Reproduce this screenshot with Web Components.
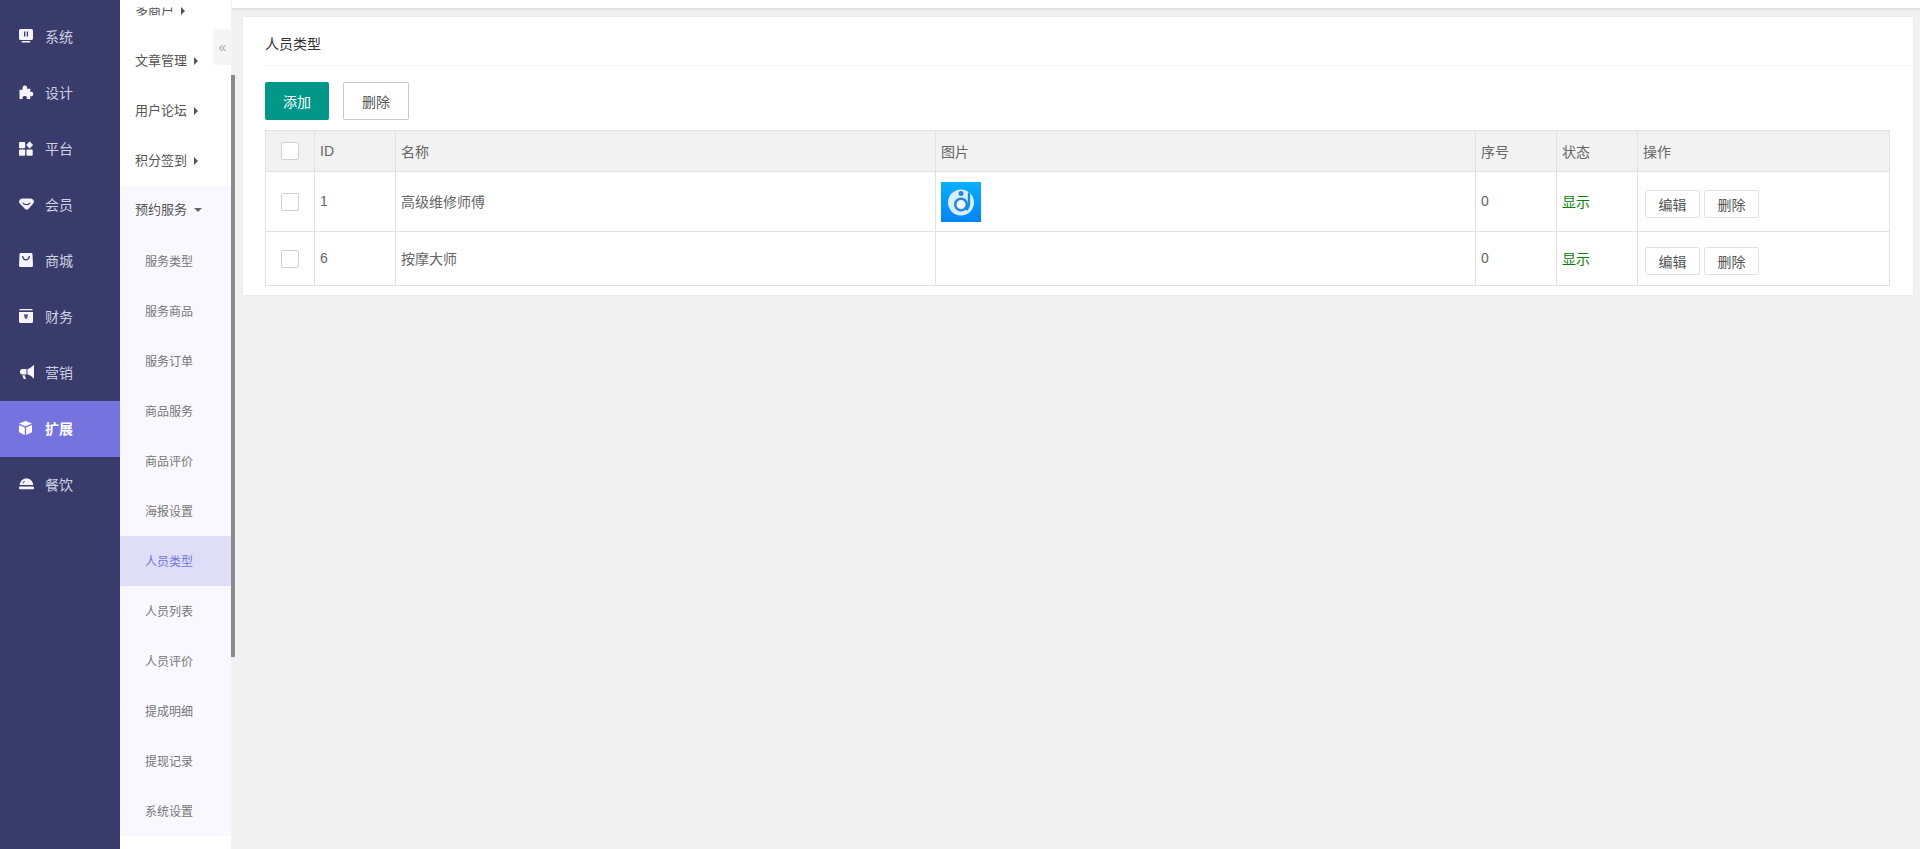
<!DOCTYPE html>
<html lang="zh">
<head>
<meta charset="utf-8">
<title>人员类型</title>
<style>
    html, body {
        margin: 0;
        height: 100%;
        overflow: hidden;
        background: #f1f1f1;
        font-family: "Liberation Sans", "Noto Sans CJK SC", sans-serif;
    }
</style>
</head>
<body>
<app-shell>
    <rail-menu slot="rail"></rail-menu>
    <sub-menu slot="sub"></sub-menu>
    <content-card title-text="人员类型">
        <div slot="tools" style="display:flex;gap:14px">
            <action-button kind="primary">添加</action-button>
            <action-button>删除</action-button>
        </div>
        <staff-table></staff-table>
    </content-card>
</app-shell>

<script>
class AppShell extends HTMLElement {
    constructor() {
        super()
        this.attachShadow({ mode: "open" })
        this.shadowRoot.innerHTML = `
            <style>
                :host {
                    display: flex;
                    height: 849px;
                    overflow: hidden;
                }
                main {
                    flex: 1;
                    min-width: 0;
                    display: flex;
                    flex-direction: column;
                }
                #bar {
                    height: 8px;
                    background: #fff;
                    box-shadow: 0 1px 3px rgba(0, 0, 0, .1);
                }
                #body {
                    padding: 9px 7px 0 11px;
                }
            </style>
            <slot name="rail"></slot>
            <slot name="sub"></slot>
            <main>
                <div id="bar"></div>
                <div id="body"><slot></slot></div>
            </main>
        `
    }
}

class RailMenu extends HTMLElement {
    static items = [
        ["系统", `<path d="M1.500 0h11A1.500 1.500 0 0 1 14 1.500v8a1.500 1.500 0 0 1-1.500 1.500h-11A1.500 1.500 0 0 1 0 9.500v-8A1.500 1.500 0 0 1 1.500 0zM5 2.500v5h1.300v-5zm2.700 0v5H9v-5z" fill-rule="evenodd"/><rect x="2.500" y="12" width="9" height="1.500" rx=".7"/>`],
        ["设计", `<path d="M5.800.5c1.400 0 2.300.9 2.300 2 0 .6-.3 1-.3 1.300h3.500v3.300c.3.100.7-.3 1.300-.3 1 0 1.700.9 1.700 2.200s-.7 2.200-1.700 2.200c-.6 0-1-.4-1.300-.3V14H7.600c-.1-.3.300-.7.300-1.300 0-1-.9-1.700-2.200-1.700s-2.200.7-2.200 1.700c0 .6.400 1 .3 1.300H.5V4.800h3.400c0-.3-.4-.7-.4-1.300 0-1.800.9-3 2.300-3z"/>`],
        ["平台", `<rect x="0" y="1" width="6.200" height="6.200" rx=".8"/><rect x="7.500" y="8.500" width="6.200" height="6.200" rx=".8"/><rect x="0" y="8.500" width="6.200" height="6.200" rx=".8"/><path d="M10.600.8l3 3.200-3 3.200-3-3.200z" stroke="currentColor" stroke-width=".8" stroke-linejoin="round"/>`],
        ["会员", `<path d="M4 1.500h7c2.400 0 4 1.500 4 3.200 0 .8-.4 1.400-1 2l-4.600 5.200c-1 1-2.300 1-3.300 0L1 6.700c-.6-.6-1-1.200-1-2C0 3 1.600 1.500 4 1.500zM4 5.400l-.7.800c1.100 1.300 2.600 2 4.200 2s3.100-.7 4.200-2l-.7-.8c-.9.900-2.100 1.500-3.500 1.500S4.900 6.300 4 5.400z" fill-rule="evenodd"/>`],
        ["商城", `<path d="M1.800 0h10.400A1.300 1.300 0 0 1 13.500 1.200L14 12.500a1.500 1.500 0 0 1-1.500 1.500h-11A1.500 1.500 0 0 1 0 12.500L.5 1.200A1.300 1.300 0 0 1 1.800 0zM3 3c0 2.400 1.700 4.500 4 4.500S11 5.400 11 3h-1.300c0 1.700-1.200 3.200-2.700 3.200S4.300 4.700 4.300 3z" fill-rule="evenodd"/>`],
        ["财务", `<rect x=".5" y="0" width="13" height="1.300"/><path d="M0 3h14v9.500a1.500 1.500 0 0 1-1.500 1.500h-11A1.500 1.500 0 0 1 0 12.500zM5 5.500v1.300h1.400v.7H5v1h1.400V10h1.200V8.500H9v-1H7.600v-.7H9V5.500z" fill-rule="evenodd"/>`],
        ["营销", `<path d="M14.500 0c.3 0 .5.200.5.500v12.500c0 .3-.2.500-.5.500-1.800-2.200-3.600-3.400-6-3.900V3.900c2.400-.5 4.200-1.700 6-3.900zM7.500 4v5.500H3.500A2.500 2.500 0 0 1 1 7V6.500A2.500 2.500 0 0 1 3.500 4zM3.300 10.300h2.400L7 14H4.700z"/>`],
        ["扩展", `<path d="M6.500 0 13 2.600 6.500 5.200 0 2.600zM0 4l5.800 2.400V14L.6 11.600c-.4-.2-.6-.5-.6-.9zM13 4v6.700c0 .4-.2.700-.6.900L7.200 14V6.400z"/>`],
        ["餐饮", `<path d="M7.500 1.500c3.700 0 6.300 2.600 6.800 6.500H.7c.5-3.900 3.100-6.500 6.800-6.500zM5 4 3.400 6.300h1L6 4.300z" fill-rule="evenodd"/><rect x="0" y="9.500" width="15" height="2.700" rx=".8"/>`]
    ]

    constructor() {
        super()
        this.attachShadow({ mode: "open" })
        const rows = RailMenu.items.map(([name, icon], index) => `
            <li class="${index === 7 ? "active" : ""}">
                <svg viewBox="0 0 15 15" width="15" height="15" fill="currentColor">${icon}</svg>
                <span>${name}</span>
            </li>
        `).join("")
        this.shadowRoot.innerHTML = `
            <style>
                :host {
                    display: block;
                    width: 120px;
                    flex: none;
                    background: #393b6a;
                }
                ul {
                    list-style: none;
                    margin: 0;
                    padding: 9px 0 0;
                }
                li {
                    box-sizing: border-box;
                    height: 56px;
                    display: flex;
                    align-items: center;
                    gap: 11px;
                    padding: 0 0 2px 19px;
                    font-size: 14px;
                    color: #cfd0e4;
                }
                li svg {
                    color: #f4f4fa;
                    flex: none;
                }
                li.active {
                    background: #7574df;
                    color: #fff;
                    font-weight: 700;
                }
                li.active svg {
                    color: #fff;
                }
            </style>
            <ul>${rows}</ul>
        `
    }
}

class SubMenu extends HTMLElement {
    static closed = ["多商户", "文章管理", "用户论坛", "积分签到"]
    static open = "预约服务"
    static children = [
        "服务类型", "服务商品", "服务订单", "商品服务", "商品评价", "海报设置",
        "人员类型", "人员列表", "人员评价", "提成明细", "提现记录", "系统设置"
    ]

    constructor() {
        super()
        this.attachShadow({ mode: "open" })
        const closed = SubMenu.closed.map((name, index) => `
            <div class="head ${index === 0 ? "cut" : ""}"><span>${name}</span><i class="right"></i></div>
        `).join("")
        const children = SubMenu.children.map(name => `
            <div class="leaf ${name === "人员类型" ? "active" : ""}">${name}</div>
        `).join("")
        this.shadowRoot.innerHTML = `
            <style>
                :host {
                    display: block;
                    position: relative;
                    width: 112px;
                    flex: none;
                    background: #f3f3f3;
                    overflow: visible;
                }
                #scroll {
                    width: 111px;
                    height: 100%;
                    overflow: hidden;
                    background: #fff;
                }
                #list {
                    margin-top: -14px;
                }
                .head {
                    box-sizing: border-box;
                    height: 50px;
                    display: flex;
                    align-items: center;
                    gap: 7px;
                    padding: 0 0 1px 15px;
                    font-size: 13px;
                    line-height: 15px;
                    color: #555;
                }
                #group .head {
                    padding-bottom: 3px;
                }
                /* the first entry is half hidden in the reference */
                .head.cut span {
                    clip-path: inset(4.5px 0 2.5px 0);
                }
                i {
                    display: block;
                    width: 0;
                    height: 0;
                    border-style: solid;
                }
                i.right {
                    border-width: 4px 0 4px 4px;
                    border-color: transparent transparent transparent #555;
                }
                i.down {
                    border-width: 4px 4px 0 4px;
                    border-color: #666 transparent transparent transparent;
                }
                #group {
                    background: #f8f8fe;
                }
                .leaf {
                    height: 50px;
                    line-height: 52px;
                    padding-left: 25px;
                    font-size: 12px;
                    color: #777;
                    overflow: hidden;
                }
                .leaf.active {
                    background: #dedef6;
                    color: #7574df;
                }
                #thumb {
                    position: absolute;
                    left: 111px;
                    top: 75px;
                    width: 4px;
                    height: 582px;
                    background: #8a8a8a;
                }
                #collapse {
                    position: absolute;
                    left: 93px;
                    top: 29px;
                    width: 19px;
                    height: 36px;
                    display: flex;
                    align-items: center;
                    justify-content: center;
                    background: #f5f5f5;
                    color: #aaa;
                    font-size: 14px;
                }
            </style>
            <div id="scroll">
                <div id="list">
                    ${closed}
                    <div id="group">
                        <div class="head"><span>${SubMenu.open}</span><i class="down"></i></div>
                        ${children}
                    </div>
                </div>
            </div>
            <div id="collapse">«</div>
            <div id="thumb"></div>
        `
    }
}

class ContentCard extends HTMLElement {
    constructor() {
        super()
        this.attachShadow({ mode: "open" })
        this.shadowRoot.innerHTML = `
            <style>
                :host {
                    display: block;
                    background: #fff;
                    box-shadow: 0 0 2px rgba(0, 0, 0, .06);
                }
                header {
                    height: 48px;
                    margin: 0 3px 0 22px;
                    line-height: 55px;
                    font-size: 14px;
                    color: #333;
                    border-bottom: 1px solid #f3f3f3;
                }
                #tools {
                    padding: 16px 22px 10px;
                }
                #content {
                    padding: 0 23px 9px 22px;
                }
            </style>
            <header>${this.getAttribute("title-text")}</header>
            <div id="tools"><slot name="tools"></slot></div>
            <div id="content"><slot></slot></div>
        `
    }
}

class ActionButton extends HTMLElement {
    constructor() {
        super()
        this.attachShadow({ mode: "open" })
        this.shadowRoot.innerHTML = `
            <style>
                :host {
                    display: inline-flex;
                    align-items: center;
                    justify-content: center;
                    box-sizing: border-box;
                    height: 38px;
                    padding: 0 18px;
                    border: 1px solid #c9c9c9;
                    border-radius: 2px;
                    background: #fff;
                    color: #555;
                    font-size: 14px;
                }
                :host([kind="primary"]) {
                    border: none;
                    background: #009688;
                    color: #fff;
                }
                :host([size="small"]) {
                    height: 28px;
                    width: 55px;
                    padding: 0;
                    border-color: #e2e2e2;
                }
            </style>
            <slot></slot>
        `
    }
}

class StaffTable extends HTMLElement {
    static rows = [
        { id: 1, name: "高级维修师傅", logo: true, sort: 0, height: 60 },
        { id: 6, name: "按摩大师", logo: false, sort: 0, height: 54 }
    ]

    constructor() {
        super()
        this.attachShadow({ mode: "open" })
        const logo = `
            <svg viewBox="0 0 40 40" width="40" height="40">
                <defs>
                    <linearGradient id="blue" x1="0" y1="0" x2="0" y2="1">
                        <stop offset="0" stop-color="#0ab0fa"/>
                        <stop offset="1" stop-color="#0083f6"/>
                    </linearGradient>
                </defs>
                <rect width="40" height="40" fill="url(#blue)"/>
                <circle cx="20" cy="20.500" r="13" fill="#d9effb"/>
                <circle cx="20" cy="11.500" r="2.500" fill="#2a85d8"/>
                <circle cx="20" cy="22.500" r="5.800" fill="#eef8fd" stroke="#2a85d8" stroke-width="2.500"/>
                <path d="M28 10.500v11.500a8 8 0 0 1-3 6" stroke="#0f8fe8" stroke-width="2.300" fill="none"/>
            </svg>
        `
        const rows = StaffTable.rows.map(row => `
            <tr style="height:${row.height}px">
                <td class="check"><span class="box"></span></td>
                <td>${row.id}</td>
                <td>${row.name}</td>
                <td class="pic">${row.logo ? logo : ""}</td>
                <td>${row.sort}</td>
                <td class="on">显示</td>
                <td class="ops">
                    <action-button size="small">编辑</action-button>
                    <action-button size="small">删除</action-button>
                </td>
            </tr>
        `).join("")
        this.shadowRoot.innerHTML = `
            <style>
                :host {
                    display: block;
                }
                table {
                    width: 1625px;
                    table-layout: fixed;
                    border-collapse: collapse;
                    font-size: 14px;
                    color: #666;
                }
                th, td {
                    border: 1px solid #e2e2e2;
                    padding: 0 5px;
                    text-align: left;
                    font-weight: 400;
                }
                td {
                    padding-bottom: 2px;
                }
                th {
                    height: 40px;
                    background: #f2f2f2;
                }
                .check {
                    padding: 0 0 0 15px;
                }
                .box {
                    display: block;
                    box-sizing: border-box;
                    width: 18px;
                    height: 18px;
                    border: 1px solid #d2d2d2;
                    border-radius: 2px;
                    background: #fff;
                }
                .pic {
                    padding-bottom: 0;
                }
                .pic svg {
                    display: block;
                }
                .on {
                    color: #0a800a;
                }
                .ops {
                    padding: 5px 0 0 7px;
                }
            </style>
            <table>
                <colgroup>
                    <col style="width:49px"><col style="width:81px"><col style="width:540px">
                    <col style="width:540px"><col style="width:81px"><col style="width:81px"><col>
                </colgroup>
                <tr>
                    <th class="check"><span class="box"></span></th>
                    <th>ID</th><th>名称</th><th>图片</th><th>序号</th><th>状态</th><th>操作</th>
                </tr>
                ${rows}
            </table>
        `
    }
}

customElements.define("app-shell", AppShell)
customElements.define("rail-menu", RailMenu)
customElements.define("sub-menu", SubMenu)
customElements.define("content-card", ContentCard)
customElements.define("action-button", ActionButton)
customElements.define("staff-table", StaffTable)
</script>
</body>
</html>
